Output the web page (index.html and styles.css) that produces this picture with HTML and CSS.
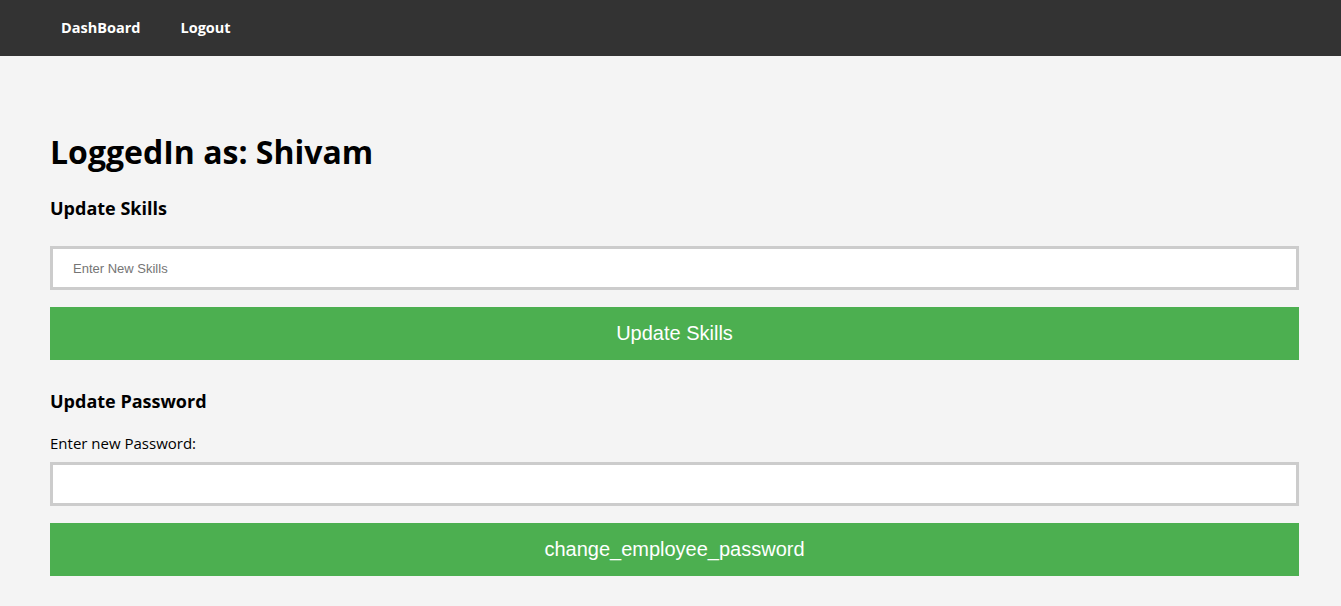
FILE: index.html
```html
<!DOCTYPE html>
<html>
<head>
<meta charset="utf-8">
<link rel="stylesheet" href="styles.css">
</head>
<body>
<nav class="navbar">
  <a class="nav-link" href="#">DashBoard</a>
  <a class="nav-link" href="#">Logout</a>
</nav>
<main class="container">
  <h1 class="title">LoggedIn as: Shivam</h1>
  <h3 class="section-title">Update Skills</h3>
  <form class="form">
    <input class="text-input skills-input" type="text" placeholder="Enter New Skills">
    <button class="btn" type="button">Update Skills</button>
  </form>
  <h3 class="section-title pw-title">Update Password</h3>
  <form class="form">
    <label class="label">Enter new Password:</label>
    <input class="text-input" type="password">
    <button class="btn" type="button">change_employee_password</button>
  </form>
</main>
</body>
</html>
```
FILE: styles.css
```css
* { box-sizing: border-box; }
body {
  margin: 0;
  background: #f4f4f4;
  font-family: "Comic Sans MS", "Open Sans", sans-serif;
  color: #000;
}
.navbar {
  background: #333;
  height: 56px;
  display: flex;
  align-items: center;
  padding-left: 41px;
  padding-bottom: 2px;
}
.nav-link {
  color: #fff;
  text-decoration: none;
  font-weight: bold;
  font-size: 14.5px;
  padding: 0 20px;
}
.container {
  width: 1249px;
  margin-left: 50px;
  padding-top: 73px;
}
.title {
  margin: 0;
  font-size: 32px;
  line-height: 46px;
  font-weight: bold;
}
.section-title {
  margin: 20px 0 0;
  font-size: 18px;
  line-height: 26px;
  font-weight: bold;
}
.pw-title { margin-top: 28px; }
.form {
  display: flex;
  flex-direction: column;
}
.skills-input { margin-top: 25px; }
.label {
  font-size: 15px;
  line-height: 20px;
  margin-top: 19px;
  margin-bottom: 9px;
}
.text-input {
  height: 44px;
  border: 3px solid #ccc;
  background: #fff;
  padding: 0 20px;
  font-family: "Liberation Sans", Arial, sans-serif;
  font-size: 13px;
  outline: none;
}
.text-input::placeholder { color: #757575; }
.btn {
  margin-top: 17px;
  height: 53px;
  background: #4caf50;
  color: #fff;
  border: none;
  font-family: "Liberation Sans", Arial, sans-serif;
  font-size: 20px;
}
```
